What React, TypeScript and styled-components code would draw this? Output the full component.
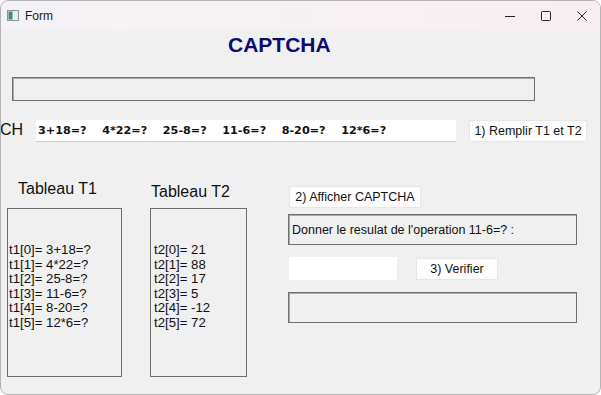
import React from "react"
import styled, { createGlobalStyle } from "styled-components"

const GlobalStyle = createGlobalStyle`
  html, body {
    margin: 0;
    padding: 0;
    background: #ffffff;
  }
  body {
    font-family: "Liberation Sans", Arial, sans-serif;
  }
`

const Window = styled.div`
  width: 601px;
  height: 395px;
  box-sizing: border-box;
  background: #f0f0f0;
  border: 1px solid #b4b4b4;
  border-radius: 8px;
  overflow: hidden;
  display: flex;
  flex-direction: column;
`

const TitleBar = styled.div`
  height: 29px;
  flex: none;
  display: flex;
  align-items: center;
  padding-left: 6px;
  background: linear-gradient(90deg, #f4f2f7 0%, #f8f0f1 60%, #f7efef 100%);
`

const TitleText = styled.span`
  font-size: 12px;
  color: #1a1a1a;
  margin-left: 6px;
  flex: 1;
`

const CaptionBtn = styled.div`
  width: 36px;
  height: 29px;
  display: flex;
  align-items: center;
  justify-content: center;
`

const Body = styled.div`
  flex: 1;
  display: flex;
  flex-direction: column;
`

const Heading = styled.h1`
  margin: 3px 0 0 227px;
  font-size: 21px;
  line-height: 24px;
  font-weight: bold;
  color: #0c0c72;
`

const SunkenBox = styled.div<{ $w: number; $h: number }>`
  box-sizing: border-box;
  width: ${p => p.$w}px;
  height: ${p => p.$h}px;
  border: 1px solid #6f6f6f;
  box-shadow: inset 1px 1px 0 #a8a8a8;
  background: #f0f0f0;
  display: flex;
  align-items: center;
  padding-left: 3px;
  font-size: 12.5px;
  color: #111;
`

const TopBox = styled(SunkenBox)`
  margin: 20px 0 0 11px;
`

const ChRow = styled.div`
  margin-top: 19px;
  display: flex;
  align-items: center;
  height: 22px;
`

const ChLabel = styled.span`
  width: 36px;
  margin-left: -1px;
  font-size: 16px;
  color: #111;
  margin-top: -3px;
`

const CaptchaField = styled.div`
  width: 420px;
  height: 22px;
  box-sizing: border-box;
  background: #ffffff;
  border-bottom: 1px solid #cfcfcf;
  padding-left: 2px;
  display: flex;
  align-items: center;
  font-family: "DejaVu Sans", Verdana, sans-serif;
  font-weight: bold;
  font-size: 11.2px;
  white-space: pre;
  color: #111;
`

const Button = styled.button<{ $w: number }>`
  width: ${p => p.$w}px;
  height: 22px;
  box-sizing: border-box;
  background: #fdfdfd;
  border: 1px solid #e6e6e6;
  border-radius: 0;
  padding: 0;
  font-family: "Liberation Sans", Arial, sans-serif;
  font-size: 12.5px;
  color: #111;
`

const RemplirBtn = styled(Button)`
  margin-left: 13px;
`

const Lower = styled.div`
  margin-top: 37px;
  display: flex;
  align-items: flex-start;
`

const TableCol = styled.div<{ $w: number; $ml: number }>`
  width: ${p => p.$w}px;
  margin-left: ${p => p.$ml}px;
  display: flex;
  flex-direction: column;
`

const TableTitle = styled.div<{ $pl: number; $pt: number }>`
  height: 29px;
  box-sizing: border-box;
  padding: ${p => p.$pt}px 0 0 ${p => p.$pl}px;
  font-size: 16px;
  line-height: 19px;
  color: #111;
`

const ListBox = styled.div<{ $pl: number }>`
  height: 169px;
  box-sizing: border-box;
  border: 1px solid #6d6d6d;
  padding: 34px 0 0 ${p => p.$pl}px;
  font-size: 13.2px;
  line-height: 14.5px;
  color: #111;
`

const RightCol = styled.div`
  margin-left: 41px;
  padding-top: 7px;
  display: flex;
  flex-direction: column;
  align-items: flex-start;
`

const AfficherBtn = styled(Button)`
  margin-left: 1px;
`

const QuestionBox = styled(SunkenBox)`
  margin-top: 6px;
`

const VerifRow = styled.div`
  margin-top: 12px;
  display: flex;
  align-items: flex-start;
  margin-left: 1px;
`

const AnswerInput = styled.div`
  width: 108px;
  height: 23px;
  background: #ffffff;
`

const VerifBtn = styled(Button)`
  margin: 1px 0 0 19px;
`

const ResultBox = styled(SunkenBox)`
  margin-top: 12px;
`

const ops = ["3+18=?", "4*22=?", "25-8=?", "11-6=?", "8-20=?", "12*6=?"]
const results = [21, 88, 17, 5, -12, 72]

const AppIcon = () => (
  <svg width="12" height="11" viewBox="0 0 12 11">
    <rect x="0.5" y="0.5" width="11" height="10" fill="#e9eef0" stroke="#8a9498" />
    <rect x="1.5" y="1.5" width="4" height="8" fill="#3f8a78" />
  </svg>
)

export default function App() {
  return (
    <>
      <GlobalStyle />
      <Window>
        <TitleBar>
          <AppIcon />
          <TitleText>Form</TitleText>
          <CaptionBtn>
            <svg width="10" height="10" viewBox="0 0 10 10">
              <line x1="0" y1="5.5" x2="10" y2="5.5" stroke="#222" strokeWidth="1" />
            </svg>
          </CaptionBtn>
          <CaptionBtn>
            <svg width="10" height="10" viewBox="0 0 10 10">
              <rect x="0.5" y="0.5" width="9" height="9" rx="1" fill="none" stroke="#222" strokeWidth="1" />
            </svg>
          </CaptionBtn>
          <CaptionBtn>
            <svg width="10" height="10" viewBox="0 0 10 10">
              <path d="M0.5 0.5 L9.5 9.5 M9.5 0.5 L0.5 9.5" stroke="#222" strokeWidth="1" />
            </svg>
          </CaptionBtn>
        </TitleBar>

        <Body>
          <Heading>CAPTCHA</Heading>
          <TopBox $w={523} $h={24} />

          <ChRow>
            <ChLabel>CH</ChLabel>
            <CaptchaField>{ops.join("    ")}</CaptchaField>
            <RemplirBtn $w={118}>1) Remplir T1 et T2</RemplirBtn>
          </ChRow>

          <Lower>
            <TableCol $w={115} $ml={6}>
              <TableTitle $pl={11} $pt={0}>Tableau T1</TableTitle>
              <ListBox $pl={1}>
                {ops.map((o, i) => (
                  <div key={i}>t1[{i}]= {o}</div>
                ))}
              </ListBox>
            </TableCol>

            <TableCol $w={97} $ml={28}>
              <TableTitle $pl={1} $pt={3}>Tableau T2</TableTitle>
              <ListBox $pl={3}>
                {results.map((r, i) => (
                  <div key={i}>t2[{i}]= {r}</div>
                ))}
              </ListBox>
            </TableCol>

            <RightCol>
              <AfficherBtn $w={132}>2) Afficher CAPTCHA</AfficherBtn>
              <QuestionBox $w={289} $h={31}>Donner le resulat de l'operation 11-6=? :</QuestionBox>
              <VerifRow>
                <AnswerInput />
                <VerifBtn $w={82}>3) Verifier</VerifBtn>
              </VerifRow>
              <ResultBox $w={289} $h={31} />
            </RightCol>
          </Lower>
        </Body>
      </Window>
    </>
  )
}
